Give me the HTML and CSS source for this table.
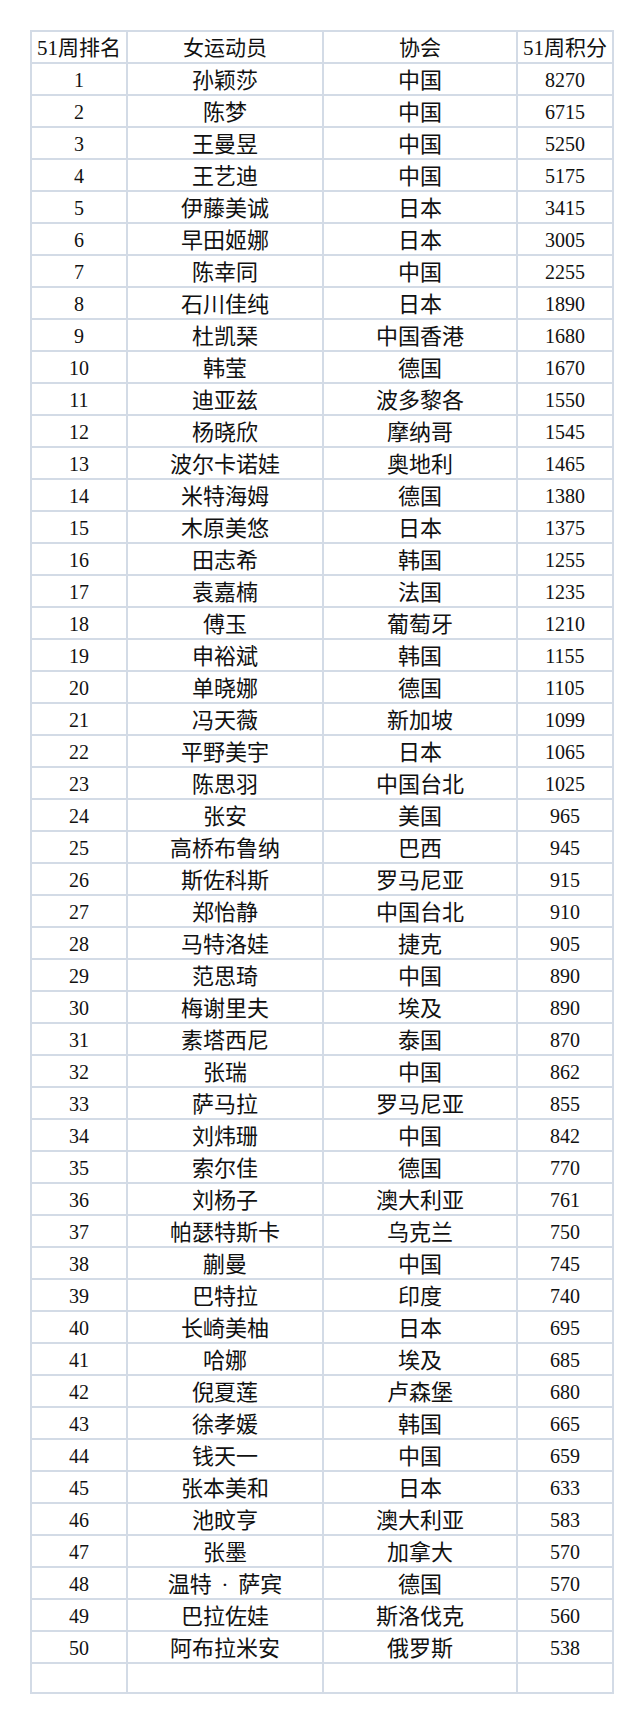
FILE: index.html
```html
<!DOCTYPE html>
<html lang="zh-CN">
<head>
<meta charset="utf-8">
<title>51周排名</title>
<link rel="stylesheet" href="styles.css">
</head>
<body>
<table class="rank">
<colgroup><col class="c1"><col class="c2"><col class="c3"><col class="c4"></colgroup>
<tr class="head"><td>51周排名</td><td>女运动员</td><td>协会</td><td>51周积分</td></tr>
<tr><td>1</td><td>孙颖莎</td><td>中国</td><td>8270</td></tr>
<tr><td>2</td><td>陈梦</td><td>中国</td><td>6715</td></tr>
<tr><td>3</td><td>王曼昱</td><td>中国</td><td>5250</td></tr>
<tr><td>4</td><td>王艺迪</td><td>中国</td><td>5175</td></tr>
<tr><td>5</td><td>伊藤美诚</td><td>日本</td><td>3415</td></tr>
<tr><td>6</td><td>早田姬娜</td><td>日本</td><td>3005</td></tr>
<tr><td>7</td><td>陈幸同</td><td>中国</td><td>2255</td></tr>
<tr><td>8</td><td>石川佳纯</td><td>日本</td><td>1890</td></tr>
<tr><td>9</td><td>杜凯琹</td><td>中国香港</td><td>1680</td></tr>
<tr><td>10</td><td>韩莹</td><td>德国</td><td>1670</td></tr>
<tr><td>11</td><td>迪亚兹</td><td>波多黎各</td><td>1550</td></tr>
<tr><td>12</td><td>杨晓欣</td><td>摩纳哥</td><td>1545</td></tr>
<tr><td>13</td><td>波尔卡诺娃</td><td>奥地利</td><td>1465</td></tr>
<tr><td>14</td><td>米特海姆</td><td>德国</td><td>1380</td></tr>
<tr><td>15</td><td>木原美悠</td><td>日本</td><td>1375</td></tr>
<tr><td>16</td><td>田志希</td><td>韩国</td><td>1255</td></tr>
<tr><td>17</td><td>袁嘉楠</td><td>法国</td><td>1235</td></tr>
<tr><td>18</td><td>傅玉</td><td>葡萄牙</td><td>1210</td></tr>
<tr><td>19</td><td>申裕斌</td><td>韩国</td><td>1155</td></tr>
<tr><td>20</td><td>单晓娜</td><td>德国</td><td>1105</td></tr>
<tr><td>21</td><td>冯天薇</td><td>新加坡</td><td>1099</td></tr>
<tr><td>22</td><td>平野美宇</td><td>日本</td><td>1065</td></tr>
<tr><td>23</td><td>陈思羽</td><td>中国台北</td><td>1025</td></tr>
<tr><td>24</td><td>张安</td><td>美国</td><td>965</td></tr>
<tr><td>25</td><td>高桥布鲁纳</td><td>巴西</td><td>945</td></tr>
<tr><td>26</td><td>斯佐科斯</td><td>罗马尼亚</td><td>915</td></tr>
<tr><td>27</td><td>郑怡静</td><td>中国台北</td><td>910</td></tr>
<tr><td>28</td><td>马特洛娃</td><td>捷克</td><td>905</td></tr>
<tr><td>29</td><td>范思琦</td><td>中国</td><td>890</td></tr>
<tr><td>30</td><td>梅谢里夫</td><td>埃及</td><td>890</td></tr>
<tr><td>31</td><td>素塔西尼</td><td>泰国</td><td>870</td></tr>
<tr><td>32</td><td>张瑞</td><td>中国</td><td>862</td></tr>
<tr><td>33</td><td>萨马拉</td><td>罗马尼亚</td><td>855</td></tr>
<tr><td>34</td><td>刘炜珊</td><td>中国</td><td>842</td></tr>
<tr><td>35</td><td>索尔佳</td><td>德国</td><td>770</td></tr>
<tr><td>36</td><td>刘杨子</td><td>澳大利亚</td><td>761</td></tr>
<tr><td>37</td><td>帕瑟特斯卡</td><td>乌克兰</td><td>750</td></tr>
<tr><td>38</td><td>蒯曼</td><td>中国</td><td>745</td></tr>
<tr><td>39</td><td>巴特拉</td><td>印度</td><td>740</td></tr>
<tr><td>40</td><td>长崎美柚</td><td>日本</td><td>695</td></tr>
<tr><td>41</td><td>哈娜</td><td>埃及</td><td>685</td></tr>
<tr><td>42</td><td>倪夏莲</td><td>卢森堡</td><td>680</td></tr>
<tr><td>43</td><td>徐孝媛</td><td>韩国</td><td>665</td></tr>
<tr><td>44</td><td>钱天一</td><td>中国</td><td>659</td></tr>
<tr><td>45</td><td>张本美和</td><td>日本</td><td>633</td></tr>
<tr><td>46</td><td>池旼亨</td><td>澳大利亚</td><td>583</td></tr>
<tr><td>47</td><td>张墨</td><td>加拿大</td><td>570</td></tr>
<tr><td>48</td><td class="spaced">温特 · 萨宾</td><td>德国</td><td>570</td></tr>
<tr><td>49</td><td>巴拉佐娃</td><td>斯洛伐克</td><td>560</td></tr>
<tr><td>50</td><td>阿布拉米安</td><td>俄罗斯</td><td>538</td></tr>
<tr><td></td><td></td><td></td><td></td></tr>
</table>
</body>
</html>
```
FILE: styles.css
```css
html, body {
  margin: 0;
  padding: 0;
  background: #ffffff;
}
body {
  padding: 30px 0 0 30px;
}
.rank {
  border-collapse: collapse;
  table-layout: fixed;
  width: 584px;
  font-family: "Liberation Serif", "Noto Sans CJK SC", serif;
  font-size: 20px;
  color: #111111;
}
.c1 { width: 96px; }
.c2 { width: 196px; }
.c3 { width: 194px; }
.c4 { width: 96px; }
.rank td {
  border: 2px solid #d3dbe6;
  height: 30px;
  padding: 3px 0 0 0;
  box-sizing: border-box;
  text-align: center;
  vertical-align: middle;
  line-height: 27px;
  white-space: nowrap;
}
.rank td:nth-child(2),
.rank td:nth-child(3) {
  font-size: 22px;
}
.rank .head td {
  font-size: 21px;
}
.rank td.spaced {
  word-spacing: 4px;
}
```
